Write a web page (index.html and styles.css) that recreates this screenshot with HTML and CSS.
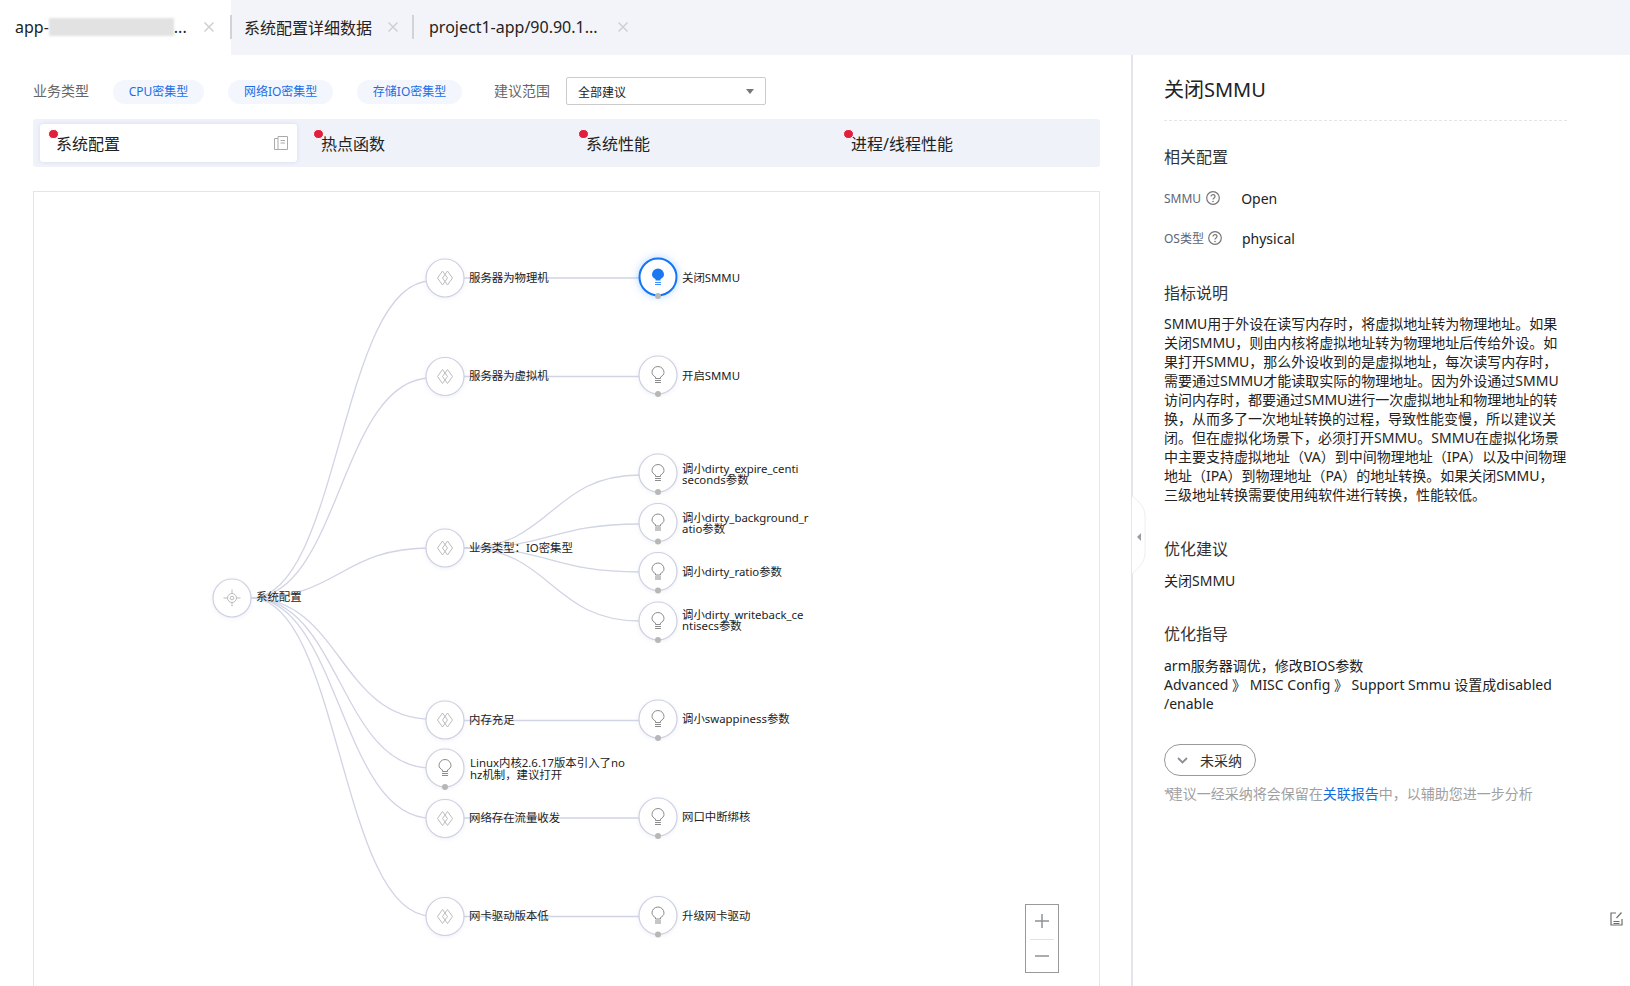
FILE: index.html
```html
<!DOCTYPE html>
<html lang="zh-CN">
<head>
    <meta charset="UTF-8">
    <meta name="viewport" content="width=device-width, initial-scale=1.0">
    <title>系统配置</title>
    <link rel="stylesheet" href="styles.css">
</head>
<body>
    <svg class="defs" width="0" height="0">
        <symbol id="x" viewBox="0 0 10 10"><path d="M0.5 0.5L9.5 9.5M9.5 0.5L0.5 9.5"/></symbol>
    </svg>

    <div class="tabbar">
        <div class="tab tab-first active">
            <span>app-</span><span class="blurred"></span><span>...</span>
            <svg class="close"><use href="#x"/></svg>
        </div>
        <div class="tab tab-second">
            <span>系统配置详细数据</span>
            <svg class="close"><use href="#x"/></svg>
        </div>
        <div class="tab tab-third">
            <span>project1-app/90.90.1...</span>
            <svg class="close"><use href="#x"/></svg>
        </div>
    </div>

    <div class="main">
        <div class="content">
            <div class="filters">
                <span class="filter-label">业务类型</span>
                <div class="pills">
                    <span class="pill">CPU密集型</span>
                    <span class="pill">网络IO密集型</span>
                    <span class="pill">存储IO密集型</span>
                </div>
                <span class="filter-label range-label">建议范围</span>
                <div class="select">全部建议<i class="caret"></i></div>
            </div>

            <div class="strip">
                <div class="strip-item current">系统配置
                    <svg class="doc-icon" viewBox="0 0 14 14"><path d="M4 .5H13.5V13.5H4ZM4 2.5H.5V13.5H4M6.5 4.5H11M6.5 7H11"/></svg>
                </div>
                <div class="strip-item">热点函数</div>
                <div class="strip-item">系统性能</div>
                <div class="strip-item">进程/线程性能</div>
            </div>

            <div class="graph">
                <svg class="graph-canvas" width="1065" height="794" viewBox="34 192 1065 794">
                    <defs>
                        <filter id="soft" x="-30%" y="-30%" width="160%" height="160%">
                            <feDropShadow dx="0" dy="1" stdDeviation="2" flood-color="#cdd2e4" flood-opacity="0.35"/>
                        </filter>
                        <filter id="glow" x="-50%" y="-50%" width="200%" height="200%">
                            <feDropShadow dx="0" dy="0" stdDeviation="4" flood-color="#1b77f2" flood-opacity="0.3"/>
                        </filter>
                        <symbol id="bulb" overflow="visible">
                            <path class="bulb" d="M-2.5 3.5V2C-4.5 1-6-.5-6-2.5A6 6 0 1 1 6-2.5C6-.5 4.5 1 2.5 2V3.5Z"/>
                            <path class="bulb" d="M-3 5.5H3M-3 7.5H3"/>
                        </symbol>
                        <symbol id="diamonds" overflow="visible">
                            <path class="diamond" d="M-2.5-7L-7.5 0L-2.5 7L2.5 0Z"/>
                            <path class="diamond" d="M2.5-7L7.5 0L2.5 7L-2.5 0Z"/>
                        </symbol>
                    </defs>

                    <g class="edges">
                        <path d="M251 598C340 598 340 281 431 281"/>
                        <path d="M251 598C340 598 340 378 431 378"/>
                        <path d="M251 598C340 598 340 548 431 548"/>
                        <path d="M251 598C340 598 340 719 431 719"/>
                        <path d="M251 598C340 598 340 768 431 768"/>
                        <path d="M251 598C340 598 340 818 431 818"/>
                        <path d="M251 598C340 598 340 916 431 916"/>
                        <path d="M464 548C551 548 551 475 640 475"/>
                        <path d="M464 548C551 548 551 524 640 524"/>
                        <path d="M464 548C551 548 551 572 640 572"/>
                        <path d="M464 548C551 548 551 621 640 621"/>
                        <path d="M464 278H640"/>
                        <path d="M464 376.5H640"/>
                        <path d="M464 720.5H640"/>
                        <path d="M464 818H640"/>
                        <path d="M464 916.5H640"/>
                    </g>

                    <g transform="translate(232 598)">
                        <circle class="node" r="19"/>
                        <circle class="target" r="4.5"/><circle class="target" r="1.8"/>
                        <path class="target" d="M0-8.5V-4.5M0 4.5V8.5M-8.5 0H-4.5M4.5 0H8.5"/>
                    </g>
                    <text class="label" x="256" y="601">系统配置</text>

                    <g transform="translate(445 278)"><circle class="node" r="19"/><use href="#diamonds"/></g>
                    <text class="label" x="469" y="282">服务器为物理机</text>
                    <g transform="translate(445 376.5)"><circle class="node" r="19"/><use href="#diamonds"/></g>
                    <text class="label" x="469" y="380">服务器为虚拟机</text>
                    <g transform="translate(445 548)"><circle class="node" r="19"/><use href="#diamonds"/></g>
                    <text class="label" x="469" y="552">业务类型：IO密集型</text>
                    <g transform="translate(445 720)"><circle class="node" r="19"/><use href="#diamonds"/></g>
                    <text class="label" x="469" y="724">内存充足</text>
                    <g transform="translate(445 768)"><circle class="node" r="19"/><use href="#bulb"/><circle class="pin" cy="19" r="3"/></g>
                    <text class="label"><tspan x="470" y="767">Linux内核2.6.17版本引入了no</tspan><tspan x="470" y="779">hz机制，建议打开</tspan></text>
                    <g transform="translate(445 818.5)"><circle class="node" r="19"/><use href="#diamonds"/></g>
                    <text class="label" x="469" y="822">网络存在流量收发</text>
                    <g transform="translate(445 916.5)"><circle class="node" r="19"/><use href="#diamonds"/></g>
                    <text class="label" x="469" y="920">网卡驱动版本低</text>

                    <g transform="translate(658 277)">
                        <circle class="node-active" r="18.5"/>
                        <path class="bulb-on" d="M-2.5 3.5V2C-4.5 1-6-.5-6-2.5A6 6 0 1 1 6-2.5C6-.5 4.5 1 2.5 2V3.5Z"/>
                        <path class="bulb-base" d="M-3 5.5H3M-3 7.5H3"/>
                        <circle class="pin" cy="19" r="3"/>
                    </g>
                    <text class="label" x="682" y="282">关闭SMMU</text>
                    <g transform="translate(658 375)"><circle class="node" r="19"/><use href="#bulb"/><circle class="pin" cy="19" r="3"/></g>
                    <text class="label" x="682" y="380">开启SMMU</text>
                    <g transform="translate(658 473)"><circle class="node" r="19"/><use href="#bulb"/><circle class="pin" cy="19" r="3"/></g>
                    <text class="label"><tspan x="682" y="473">调小dirty_expire_centi</tspan><tspan x="682" y="484">seconds参数</tspan></text>
                    <g transform="translate(658 522.5)"><circle class="node" r="19"/><use href="#bulb"/><circle class="pin" cy="19" r="3"/></g>
                    <text class="label"><tspan x="682" y="522">调小dirty_background_r</tspan><tspan x="682" y="533">atio参数</tspan></text>
                    <g transform="translate(658 571.5)"><circle class="node" r="19"/><use href="#bulb"/><circle class="pin" cy="19" r="3"/></g>
                    <text class="label" x="682" y="576">调小dirty_ratio参数</text>
                    <g transform="translate(658 621)"><circle class="node" r="19"/><use href="#bulb"/><circle class="pin" cy="19" r="3"/></g>
                    <text class="label"><tspan x="682" y="619">调小dirty_writeback_ce</tspan><tspan x="682" y="630">ntisecs参数</tspan></text>
                    <g transform="translate(658 719)"><circle class="node" r="19"/><use href="#bulb"/><circle class="pin" cy="19" r="3"/></g>
                    <text class="label" x="682" y="723">调小swappiness参数</text>
                    <g transform="translate(658 817)"><circle class="node" r="19"/><use href="#bulb"/><circle class="pin" cy="19" r="3"/></g>
                    <text class="label" x="682" y="821">网口中断绑核</text>
                    <g transform="translate(658 915.5)"><circle class="node" r="19"/><use href="#bulb"/><circle class="pin" cy="19" r="3"/></g>
                    <text class="label" x="682" y="920">升级网卡驱动</text>
                </svg>

                <div class="zoom-ctrl">
                    <div class="zoom-btn zoom-plus"><svg width="14" height="14"><path d="M0 7H14M7 0V14"/></svg></div>
                    <div class="zoom-btn"><svg width="14" height="14"><path d="M0 7H14"/></svg></div>
                </div>
            </div>
        </div>

        <aside class="detail">
            <svg class="handle" width="16" height="80" viewBox="0 0 16 80">
                <path class="handle-bg" d="M0 1C8 7 13 13 13 21V58C13 66 8 72 0 79"/>
                <path class="handle-arrow" d="M9 38V46L5 42Z"/>
            </svg>
            <svg class="edit-icon" width="13" height="14" viewBox="0 0 13 14"><path d="M6 1H1V13H12V7M11.5 .5L6.5 6M3.5 9.5H9.5M3.5 11.5H9.5"/></svg>

            <h1 class="detail-title">关闭SMMU</h1>

            <h2 class="section first">相关配置</h2>
            <div class="kv">
                <span class="key">SMMU</span>
                <svg class="help help-smmu" width="14" height="14" viewBox="0 0 14 14"><circle cx="7" cy="7" r="6.3"/><path d="M5 5.5C5 3 9 3 9 5.5C9 7 7 6.8 7 8.5"/><circle class="help-dot" cx="7" cy="10.5" r=".8"/></svg>
                <span class="val">Open</span>
            </div>
            <div class="kv">
                <span class="key">OS类型</span>
                <svg class="help help-os" width="14" height="14" viewBox="0 0 14 14"><circle cx="7" cy="7" r="6.3"/><path d="M5 5.5C5 3 9 3 9 5.5C9 7 7 6.8 7 8.5"/><circle class="help-dot" cx="7" cy="10.5" r=".8"/></svg>
                <span class="val">physical</span>
            </div>

            <h2 class="section section-desc">指标说明</h2>
            <p class="para para-desc">SMMU用于外设在读写内存时，将虚拟地址转为物理地址。如果<br>关闭SMMU，则由内核将虚拟地址转为物理地址后传给外设。如<br>果打开SMMU，那么外设收到的是虚拟地址，每次读写内存时，<br>需要通过SMMU才能读取实际的物理地址。因为外设通过SMMU<br>访问内存时，都要通过SMMU进行一次虚拟地址和物理地址的转<br>换，从而多了一次地址转换的过程，导致性能变慢，所以建议关<br>闭。但在虚拟化场景下，必须打开SMMU。SMMU在虚拟化场景<br>中主要支持虚拟地址（VA）到中间物理地址（IPA）以及中间物理<br>地址（IPA）到物理地址（PA）的地址转换。如果关闭SMMU，<br>三级地址转换需要使用纯软件进行转换，性能较低。</p>

            <h2 class="section section-desc">优化建议</h2>
            <p class="para">关闭SMMU</p>

            <h2 class="section section-guide">优化指导</h2>
            <p class="para">arm服务器调优，修改BIOS参数<br>Advanced 》 MISC Config 》 Support Smmu 设置成disabled<br>/enable</p>

            <div class="adopt">
                <svg width="11" height="7" viewBox="0 0 11 7"><path d="M1 1L5.5 5.5L10 1"/></svg>
                未采纳
            </div>
            <p class="note"><span class="note-star">*</span>建议一经采纳将会保留在<a class="note-link">关联报告</a>中，以辅助您进一步分析</p>
        </aside>
    </div>
</body>
</html>
```

FILE: styles.css
```css
* {
    box-sizing: border-box;
}
html, body {
    height: 100%;
}
body {
    margin: 0;
    height: 986px;
    overflow: hidden;
    display: flex;
    flex-direction: column;
    background: #fff;
    color: #222;
    font-family: "Noto Sans", "Noto Sans CJK SC", sans-serif;
}
.defs {
    position: absolute;
}

/* top tabs */
.tabbar {
    display: flex;
    height: 55px;
    flex-shrink: 0;
    background: #f3f4f9;
    font-size: 16px;
    color: #222;
}
.tab {
    display: flex;
    align-items: center;
    height: 55px;
    padding-bottom: 2px;
    white-space: nowrap;
    position: relative;
}
.tab.active {
    background: #fff;
}
.tab-first {
    width: 231px;
    padding-left: 15px;
}
.tab-second {
    width: 182px;
    padding-left: 13px;
}
.tab-third {
    padding-left: 16px;
}
.tab-second::after, .tab-first::after {
    content: "";
    position: absolute;
    right: -1px;
    top: 15px;
    width: 2px;
    height: 24px;
    background: #d2d3d6;
}
.blurred {
    width: 125px;
    height: 18px;
    background: #e2e2e2;
    filter: blur(1px);
}
.close {
    width: 10px;
    height: 10px;
    fill: none;
    stroke: #cfd0d3;
    stroke-width: 1.5;
}
.tab-first .close {
    margin-left: 17px;
}
.tab-second .close {
    margin-left: 16px;
}
.tab-third .close {
    margin-left: 20px;
}

.main {
    flex: 1;
    display: flex;
    min-height: 0;
}

/* left side */
.content {
    width: 1131px;
    flex-shrink: 0;
    padding: 22px 31px 0 33px;
    display: flex;
    flex-direction: column;
}
.filters {
    display: flex;
    align-items: center;
    height: 28px;
}
.filter-label {
    font-size: 14px;
    line-height: 20px;
    color: #666;
    margin-top: -1px;
}
.pills {
    display: flex;
    gap: 24px;
    margin-left: 24px;
}
.pill {
    height: 24px;
    line-height: 24px;
    padding: 0 15.75px;
    border-radius: 12px;
    background: #f3f6fc;
    color: #1a6fe8;
    font-size: 12px;
    margin-top: 2px;
}
.range-label {
    margin-left: 32px;
}
.select {
    width: 200px;
    height: 28px;
    margin-left: 16px;
    border: 1px solid #ccc;
    border-radius: 2px;
    padding-left: 11px;
    font-size: 12px;
    line-height: 29px;
    color: #222;
    position: relative;
}
.caret {
    position: absolute;
    right: 11px;
    top: 11px;
    border: 4px solid transparent;
    border-top: 5px solid #777;
    border-bottom: none;
}

.strip {
    margin-top: 14px;
    height: 48px;
    padding: 5px 8px 5px 7px;
    display: grid;
    grid-template-columns: repeat(4, 1fr);
    gap: 8px;
    background: #eff2f9;
    border-radius: 3px;
    flex-shrink: 0;
}
.strip-item {
    height: 38px;
    line-height: 40px;
    padding-left: 16px;
    font-size: 16px;
    color: #222;
    position: relative;
    border-radius: 3px;
}
.strip-item::before {
    content: "";
    position: absolute;
    left: 8px;
    top: 4.5px;
    width: 8.5px;
    height: 8.5px;
    border-radius: 50%;
    background: #e0203c;
    border: 1.5px solid #fff;
}
.strip-item.current {
    background: #fff;
    box-shadow: 0 0 4px rgba(120, 135, 200, 0.2);
}
.doc-icon {
    position: absolute;
    right: 9px;
    top: 12px;
    width: 14px;
    height: 14px;
    fill: none;
    stroke: #aaa;
    stroke-width: 1;
}

/* graph */
.graph {
    flex: 1;
    margin-top: 24px;
    border: 1px solid #e3e4ee;
    border-bottom: none;
    position: relative;
    min-height: 0;
    overflow: hidden;
}
.graph-canvas {
    display: block;
}
.edges path {
    fill: none;
    stroke: #d0d4e4;
    stroke-width: 1.3;
}
.node {
    fill: #fff;
    stroke: #cdd0e0;
    stroke-width: 1.2;
    filter: url(#soft);
}
.node-active {
    fill: #fff;
    stroke: #1273f5;
    stroke-width: 2;
    filter: url(#glow);
}
.bulb {
    fill: none;
    stroke: #8c8c8c;
    stroke-width: 1;
}
.bulb-on {
    fill: #1b77f2;
}
.bulb-base {
    fill: none;
    stroke: #3d8bf5;
    stroke-width: 1.2;
}
.diamond, .target {
    fill: none;
    stroke: #bcbcbc;
    stroke-width: 1;
}
.pin {
    fill: #b7b7b7;
}
.label {
    font-size: 11.4px;
    fill: #222;
}
.zoom-ctrl {
    position: absolute;
    right: 40px;
    bottom: 13px;
    width: 34px;
    height: 69px;
    background: #fff;
    border: 1.5px solid #999;
    display: flex;
    flex-direction: column;
}
.zoom-btn {
    flex: 1;
    display: flex;
    align-items: center;
    justify-content: center;
}
.zoom-btn svg {
    fill: none;
    stroke: #8f9299;
    stroke-width: 1.5;
}
.zoom-plus {
    border-bottom: 1px solid #e1e2e8;
    margin: 0 4px;
    padding-bottom: 2px;
}

/* right panel */
.detail {
    flex: 1;
    padding: 0 63px 0 31px;
    border-left: 2px solid #e3e4ee;
    position: relative;
}
.handle {
    position: absolute;
    left: -1px;
    top: 440px;
}
.handle-bg {
    fill: #fff;
    stroke: #eeeef2;
}
.handle-arrow {
    fill: #9a9da6;
}
.edit-icon {
    position: absolute;
    right: 7px;
    top: 857px;
    fill: none;
    stroke: #6f6f6f;
    stroke-width: 1.2;
}
.detail-title {
    margin: 20px 0 0;
    padding-bottom: 15px;
    font-size: 20px;
    line-height: 30px;
    font-weight: normal;
    color: #222;
    border-bottom: 1px dashed #e4e5ea;
}
.section {
    margin: 31px 0 0;
    font-size: 16px;
    line-height: 24px;
    font-weight: normal;
    color: #333;
}
.section.first {
    margin-top: 24px;
}
.section-desc {
    margin-top: 33px;
}
.section-guide {
    margin-top: 32px;
}
.kv {
    display: flex;
    align-items: center;
    height: 20px;
    margin-top: 20px;
}
.section.first + .kv {
    margin-top: 19px;
}
.key {
    font-size: 12px;
    color: #5f6476;
}
.help {
    margin-left: 5px;
    fill: none;
    stroke: #777;
    stroke-width: 1.2;
}
.help-os {
    margin-left: 4px;
}
.help-dot {
    fill: #777;
    stroke: none;
}
.val {
    font-size: 14px;
    color: #222;
}
.help-smmu + .val {
    margin-left: 21px;
}
.help-os + .val {
    margin-left: 20px;
}
.para {
    margin: 10px 0 0;
    font-size: 14px;
    line-height: 19px;
    color: #222;
    white-space: nowrap;
}
.para-desc {
    margin-top: 9px;
}
.adopt {
    margin-top: 31px;
    width: 92px;
    height: 32px;
    border: 1px solid #999;
    border-radius: 16px;
    display: flex;
    align-items: center;
    gap: 12px;
    padding-left: 12px;
    font-size: 14px;
    color: #333;
}
.adopt svg {
    fill: none;
    stroke: #8a8f99;
    stroke-width: 1.8;
}
.note {
    margin: 8px 0 0;
    font-size: 14px;
    line-height: 20px;
    color: #a0a0a0;
    white-space: nowrap;
}
.note-star {
    letter-spacing: -3px;
}
.note-link {
    color: #0f6fe0;
}
```
